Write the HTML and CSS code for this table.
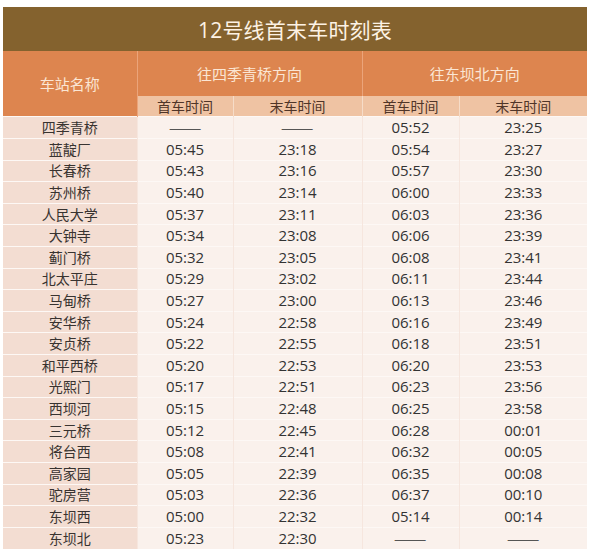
FILE: index.html
```html
<!DOCTYPE html>
<html lang="zh-CN">
<head>
<meta charset="utf-8">
<title>12号线首末车时刻表</title>
<link rel="stylesheet" href="styles.css">
</head>
<body>
<table class="timetable">
  <colgroup>
    <col class="c-station">
    <col class="c-first">
    <col class="c-last">
    <col class="c-first2">
    <col class="c-last2">
  </colgroup>
  <thead>
    <tr class="title-row"><th colspan="5">12号线首末车时刻表</th></tr>
    <tr class="dir-row">
      <th rowspan="2" class="station-head">车站名称</th>
      <th colspan="2">往四季青桥方向</th>
      <th colspan="2">往东坝北方向</th>
    </tr>
    <tr class="sub-row">
      <th>首车时间</th><th>末车时间</th><th>首车时间</th><th>末车时间</th>
    </tr>
  </thead>
  <tbody>
    <tr><td class="name">四季青桥</td><td><span class="dash">——</span></td><td><span class="dash">——</span></td><td>05:52</td><td>23:25</td></tr>
    <tr><td class="name">蓝靛厂</td><td>05:45</td><td>23:18</td><td>05:54</td><td>23:27</td></tr>
    <tr><td class="name">长春桥</td><td>05:43</td><td>23:16</td><td>05:57</td><td>23:30</td></tr>
    <tr><td class="name">苏州桥</td><td>05:40</td><td>23:14</td><td>06:00</td><td>23:33</td></tr>
    <tr><td class="name">人民大学</td><td>05:37</td><td>23:11</td><td>06:03</td><td>23:36</td></tr>
    <tr><td class="name">大钟寺</td><td>05:34</td><td>23:08</td><td>06:06</td><td>23:39</td></tr>
    <tr><td class="name">蓟门桥</td><td>05:32</td><td>23:05</td><td>06:08</td><td>23:41</td></tr>
    <tr><td class="name">北太平庄</td><td>05:29</td><td>23:02</td><td>06:11</td><td>23:44</td></tr>
    <tr><td class="name">马甸桥</td><td>05:27</td><td>23:00</td><td>06:13</td><td>23:46</td></tr>
    <tr><td class="name">安华桥</td><td>05:24</td><td>22:58</td><td>06:16</td><td>23:49</td></tr>
    <tr><td class="name">安贞桥</td><td>05:22</td><td>22:55</td><td>06:18</td><td>23:51</td></tr>
    <tr><td class="name">和平西桥</td><td>05:20</td><td>22:53</td><td>06:20</td><td>23:53</td></tr>
    <tr><td class="name">光熙门</td><td>05:17</td><td>22:51</td><td>06:23</td><td>23:56</td></tr>
    <tr><td class="name">西坝河</td><td>05:15</td><td>22:48</td><td>06:25</td><td>23:58</td></tr>
    <tr><td class="name">三元桥</td><td>05:12</td><td>22:45</td><td>06:28</td><td>00:01</td></tr>
    <tr><td class="name">将台西</td><td>05:08</td><td>22:41</td><td>06:32</td><td>00:05</td></tr>
    <tr><td class="name">高家园</td><td>05:05</td><td>22:39</td><td>06:35</td><td>00:08</td></tr>
    <tr><td class="name">驼房营</td><td>05:03</td><td>22:36</td><td>06:37</td><td>00:10</td></tr>
    <tr><td class="name">东坝西</td><td>05:00</td><td>22:32</td><td>05:14</td><td>00:14</td></tr>
    <tr><td class="name">东坝北</td><td>05:23</td><td>22:30</td><td><span class="dash">——</span></td><td><span class="dash">——</span></td></tr>
  </tbody>
</table>
</body>
</html>
```

FILE: styles.css
```css
html, body {
  margin: 0;
  padding: 0;
  background: #ffffff;
}

body {
  padding: 7px 0 0 3px;
  font-family: "Open Sans", "Noto Sans CJK SC", sans-serif;
}

.timetable {
  border-collapse: collapse;
  table-layout: fixed;
  width: 584px;
}

.c-station { width: 134px; }
.c-first { width: 96px; }
.c-last { width: 129px; }
.c-first2 { width: 97px; }
.c-last2 { width: 128px; }

.timetable th,
.timetable td {
  padding: 0;
  text-align: center;
  font-weight: normal;
  white-space: nowrap;
}

.title-row th {
  height: 44px;
  background: #84622e;
  color: #fdf2e4;
  font-size: 21px;
  font-family: "Open Sans", "Noto Sans CJK SC", sans-serif;
  letter-spacing: 0.2px;
}

.dir-row th {
  height: 45px;
  background: #dd854f;
  color: #fbe6d4;
  font-size: 15px;
  font-family: "Noto Sans CJK SC", sans-serif;
  border-left: 1px solid #eba47a;
}

.dir-row th.station-head {
  border-left: none;
  border-right: 1px solid #eba47a;
}

.sub-row th {
  height: 20px;
  background: #efc3a3;
  color: #4f3528;
  font-size: 14px;
  line-height: 20px;
  font-family: "Noto Sans CJK SC", sans-serif;
  border-left: 1px solid #f6dcc8;
}

.timetable tbody tr {
  height: 21.6px;
}

.timetable tbody td {
  height: 20.6px;
  background: #faf1ec;
  color: #333333;
  font-size: 15px;
  line-height: 19px;
  border-top: 1px solid #fdf8f5;
  border-left: 1px solid #f6e6de;
}

.timetable tbody td.name {
  background: #f3ddd2;
  color: #383330;
  font-size: 14px;
  font-family: "Noto Sans CJK SC", sans-serif;
  border-left: none;
}

.dash {
  display: inline-block;
  font-family: "Noto Sans CJK SC", sans-serif;
  font-size: 17px;
  color: #555555;
  transform: scaleX(1.15);
}
```
